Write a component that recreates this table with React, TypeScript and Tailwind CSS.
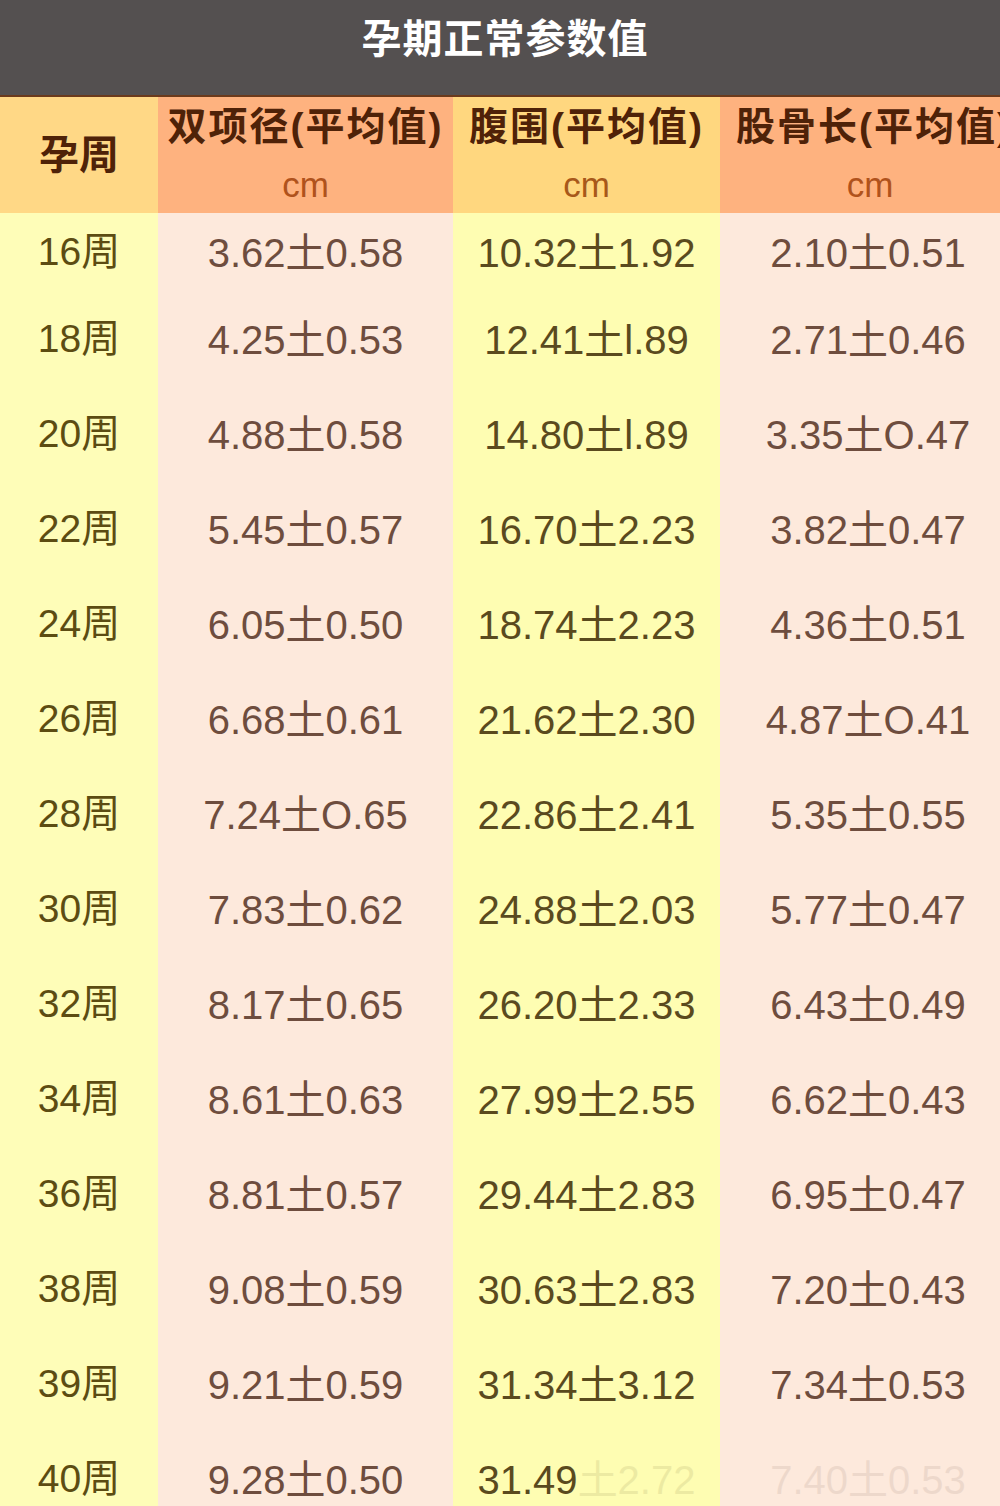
const rows: [string, string, string, string][] = [
  ["16周", "3.62土0.58", "10.32土1.92", "2.10土0.51"],
  ["18周", "4.25土0.53", "12.41土l.89", "2.71土0.46"],
  ["20周", "4.88土0.58", "14.80土l.89", "3.35土O.47"],
  ["22周", "5.45土0.57", "16.70土2.23", "3.82土0.47"],
  ["24周", "6.05土0.50", "18.74土2.23", "4.36土0.51"],
  ["26周", "6.68土0.61", "21.62土2.30", "4.87土O.41"],
  ["28周", "7.24土O.65", "22.86土2.41", "5.35土0.55"],
  ["30周", "7.83土0.62", "24.88土2.03", "5.77土0.47"],
  ["32周", "8.17土0.65", "26.20土2.33", "6.43土0.49"],
  ["34周", "8.61土0.63", "27.99土2.55", "6.62土0.43"],
  ["36周", "8.81土0.57", "29.44土2.83", "6.95土0.47"],
  ["38周", "9.08土0.59", "30.63土2.83", "7.20土0.43"],
  ["39周", "9.21土0.59", "31.34土3.12", "7.34土0.53"],
];

const font = { fontFamily: '"Liberation Sans", "Noto Sans CJK SC", sans-serif' };

export default function App() {
  return (
    <div className="w-[1000px] h-[1506px] overflow-hidden bg-[#fde9dc]" style={font}>
      <div className="h-[97px] bg-[#545050] border-b-2 border-[#6b3a1c] flex items-center justify-center">
        <span className="text-white text-[40px] font-bold tracking-[1px] -mt-[18px] ml-[10px]">
          孕期正常参数值
        </span>
      </div>

      <table className="table-fixed border-collapse w-[1000px]">
        <colgroup>
          <col className="w-[158px]" />
          <col className="w-[295px]" />
          <col className="w-[267px]" />
          <col className="w-[280px]" />
        </colgroup>
        <thead>
          <tr className="h-[60px]">
            <th
              rowSpan={2}
              className="bg-[#ffd886] text-[#4f2208] text-[40px] font-bold align-middle p-0"
            >
              孕周
            </th>
            <th className="bg-[#feb27f] text-[#4f2208] text-[39px] font-bold tracking-[2px] whitespace-nowrap pb-[6px] px-0 align-bottom leading-[48px]">
              双项径(平均值)
            </th>
            <th className="bg-[#ffd77f] text-[#4f2208] text-[39px] font-bold tracking-[2px] whitespace-nowrap pb-[6px] px-0 align-bottom leading-[48px]">
              腹围(平均值)
            </th>
            <th className="bg-[#feb27f] text-[#4f2208] text-[39px] font-bold tracking-[2px] whitespace-nowrap pb-[6px] px-0 align-bottom leading-[48px] overflow-visible">
              <span className="ml-[16px]">股骨长(平均值)</span>
            </th>
          </tr>
          <tr className="h-[56px]">
            <td className="bg-[#feb27f] text-[#b0521c] text-[35px] text-center p-0 align-middle">cm</td>
            <td className="bg-[#ffd77f] text-[#a8581a] text-[35px] text-center p-0 align-middle">cm</td>
            <td className="bg-[#feb27f] text-[#b0521c] text-[35px] text-center p-0 align-middle">
              <span className="ml-[20px]">cm</span>
            </td>
          </tr>
        </thead>
        <tbody>
          {rows.map((r, i) => (
            <tr key={r[0]} className={i === 0 ? "h-[79px]" : "h-[95px]"}>
              <td className="bg-[#fefdb8] text-[#5c4c12] text-[39px] text-center p-0 align-middle">
                {r[0]}
              </td>
              <td className="bg-[#fde9dc] text-[#6e4d3e] text-[40px] text-center p-0 align-middle">
                {r[1]}
              </td>
              <td className="bg-[#fefdb2] text-[#5a4a1e] text-[40px] text-center p-0 align-middle">
                {r[2]}
              </td>
              <td className="bg-[#fde9dc] text-[#6e4d3e] text-[40px] text-center p-0 align-middle">
                <span className="ml-[16px]">{r[3]}</span>
              </td>
            </tr>
          ))}
          <tr className="h-[95px]">
            <td className="bg-[#fefdb8] text-[#5c4c12] text-[39px] text-center p-0 align-middle">40周</td>
            <td className="bg-[#fde9dc] text-[#6e4d3e] text-[40px] text-center p-0 align-middle">
              9.28土0.50
            </td>
            <td className="bg-[#fefdb2] text-[#5a4a1e] text-[40px] text-center p-0 align-middle">
              31.49<span className="opacity-10">土2.72</span>
            </td>
            <td className="bg-[#fde9dc] text-[#6e4d3e] text-[40px] text-center p-0 align-middle">
              <span className="ml-[16px] opacity-10">7.40土0.53</span>
            </td>
          </tr>
        </tbody>
      </table>
    </div>
  );
}
